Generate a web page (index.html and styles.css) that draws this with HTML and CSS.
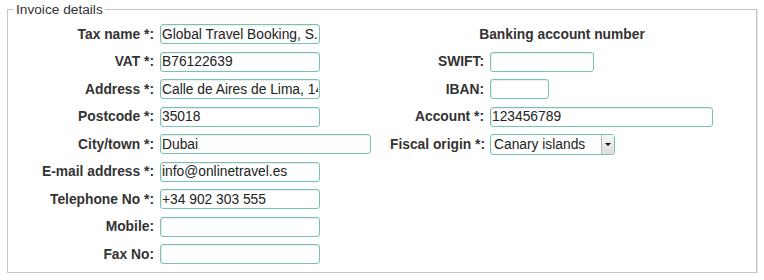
FILE: index.html
```html
<!DOCTYPE html>
<html lang="en">
<head>
    <meta charset="UTF-8">
    <title>Invoice details</title>
    <link rel="stylesheet" href="styles.css">
</head>
<body>
    <fieldset class="invoice">
        <legend>Invoice details</legend>
        <div class="grid">
            <label class="lbl" for="taxName">Tax name *:</label>
            <div class="fld"><input type="text" id="taxName" class="w-std" value="Global Travel Booking, S.L."></div>
            <div class="bank-title">Banking account number</div>

            <label class="lbl" for="vat">VAT *:</label>
            <div class="fld"><input type="text" id="vat" class="w-std" value="B76122639"></div>
            <label class="lbl" for="swift">SWIFT:</label>
            <div class="fld"><input type="text" id="swift" class="w-swift"></div>

            <label class="lbl" for="address">Address *:</label>
            <div class="fld"><input type="text" id="address" class="w-std" value="Calle de Aires de Lima, 14"></div>
            <label class="lbl" for="iban">IBAN:</label>
            <div class="fld"><input type="text" id="iban" class="w-iban"></div>

            <label class="lbl" for="postcode">Postcode *:</label>
            <div class="fld"><input type="text" id="postcode" class="w-std" value="35018"></div>
            <label class="lbl" for="account">Account *:</label>
            <div class="fld"><input type="text" id="account" class="w-account" value="123456789"></div>

            <label class="lbl" for="city">City/town *:</label>
            <div class="fld"><input type="text" id="city" class="w-city" value="Dubai"></div>
            <label class="lbl" for="fiscal">Fiscal origin *:</label>
            <div class="fld">
                <div class="select-box">
                    <select id="fiscal">
                        <option>Canary islands</option>
                        <option>Peninsula</option>
                        <option>Ceuta y Melilla</option>
                    </select>
                    <span class="select-btn"><span class="arrow"></span></span>
                </div>
            </div>

            <label class="lbl" for="email">E-mail address *:</label>
            <div class="fld"><input type="text" id="email" class="w-std" value="info@onlinetravel.es"></div>
            <div></div><div></div>

            <label class="lbl" for="phone">Telephone No *:</label>
            <div class="fld"><input type="text" id="phone" class="w-std" value="+34 902 303 555"></div>
            <div></div><div></div>

            <label class="lbl" for="mobile">Mobile:</label>
            <div class="fld"><input type="text" id="mobile" class="w-std"></div>
            <div></div><div></div>

            <label class="lbl" for="fax">Fax No:</label>
            <div class="fld"><input type="text" id="fax" class="w-std"></div>
            <div></div><div></div>
        </div>
    </fieldset>
</body>
</html>
```
FILE: styles.css
```css
body {
    margin: 0;
    padding: 0;
    font-family: "Liberation Sans", Arial, sans-serif;
    font-size: 13.8px;
    color: #333;
    background: #fff;
}

.invoice {
    margin: 2px 0 0 7px;
    width: 750px;
    height: 271px;
    box-sizing: border-box;
    padding: 0;
    border: 1px solid #c4c4c4;
    box-shadow: 1px 1px 0 #e6e6e6;
}

.invoice legend {
    margin-left: 6px;
    padding: 0 2px;
    color: #333;
    font-size: 13.7px;
}

.grid {
    display: grid;
    grid-template-columns: 146px 224px 94px 244px;
    grid-auto-rows: 20px;
    column-gap: 6px;
    row-gap: 7.5px;
    padding-top: 7px;
}

.lbl {
    font-weight: bold;
    text-align: right;
    white-space: nowrap;
    align-self: center;
    color: #333;
}

.fld {
    display: flex;
    align-items: center;
}

.bank-title {
    grid-column: 3 / span 2;
    text-align: center;
    font-weight: bold;
    align-self: center;
    color: #333;
}

input {
    box-sizing: border-box;
    height: 20px;
    padding: 0 1px;
    margin: 0;
    border: 1px solid #77c1b5;
    border-radius: 3px;
    box-shadow: inset 1px 1px 1px rgba(0, 0, 0, 0.08);
    font-family: "Liberation Sans", Arial, sans-serif;
    font-size: 13.8px;
    color: #222;
    background: #fff;
}

.w-std { width: 160px; }
.w-city { width: 211px; }
.w-swift { width: 104px; }
.w-iban { width: 59px; }
.w-account { width: 223px; }

.select-box {
    position: relative;
    width: 125px;
    height: 21px;
}

select {
    appearance: none;
    -webkit-appearance: none;
    box-sizing: border-box;
    width: 125px;
    height: 21px;
    margin: 0;
    padding: 0 0 0 3px;
    border: 1px solid #77c1b5;
    border-radius: 3px;
    font-family: "Liberation Sans", Arial, sans-serif;
    font-size: 13.8px;
    color: #222;
    background: #fff;
}

.select-btn {
    position: absolute;
    top: 1px;
    right: 1px;
    bottom: 1px;
    width: 12px;
    border-left: 1px solid #b8b8b8;
    background: linear-gradient(to bottom, #f7f7f7, #dcdcdc);
    pointer-events: none;
}

.select-btn .arrow {
    position: absolute;
    top: 8px;
    left: 3px;
    border-left: 3px solid transparent;
    border-right: 3px solid transparent;
    border-top: 3px solid #111;
}
```
